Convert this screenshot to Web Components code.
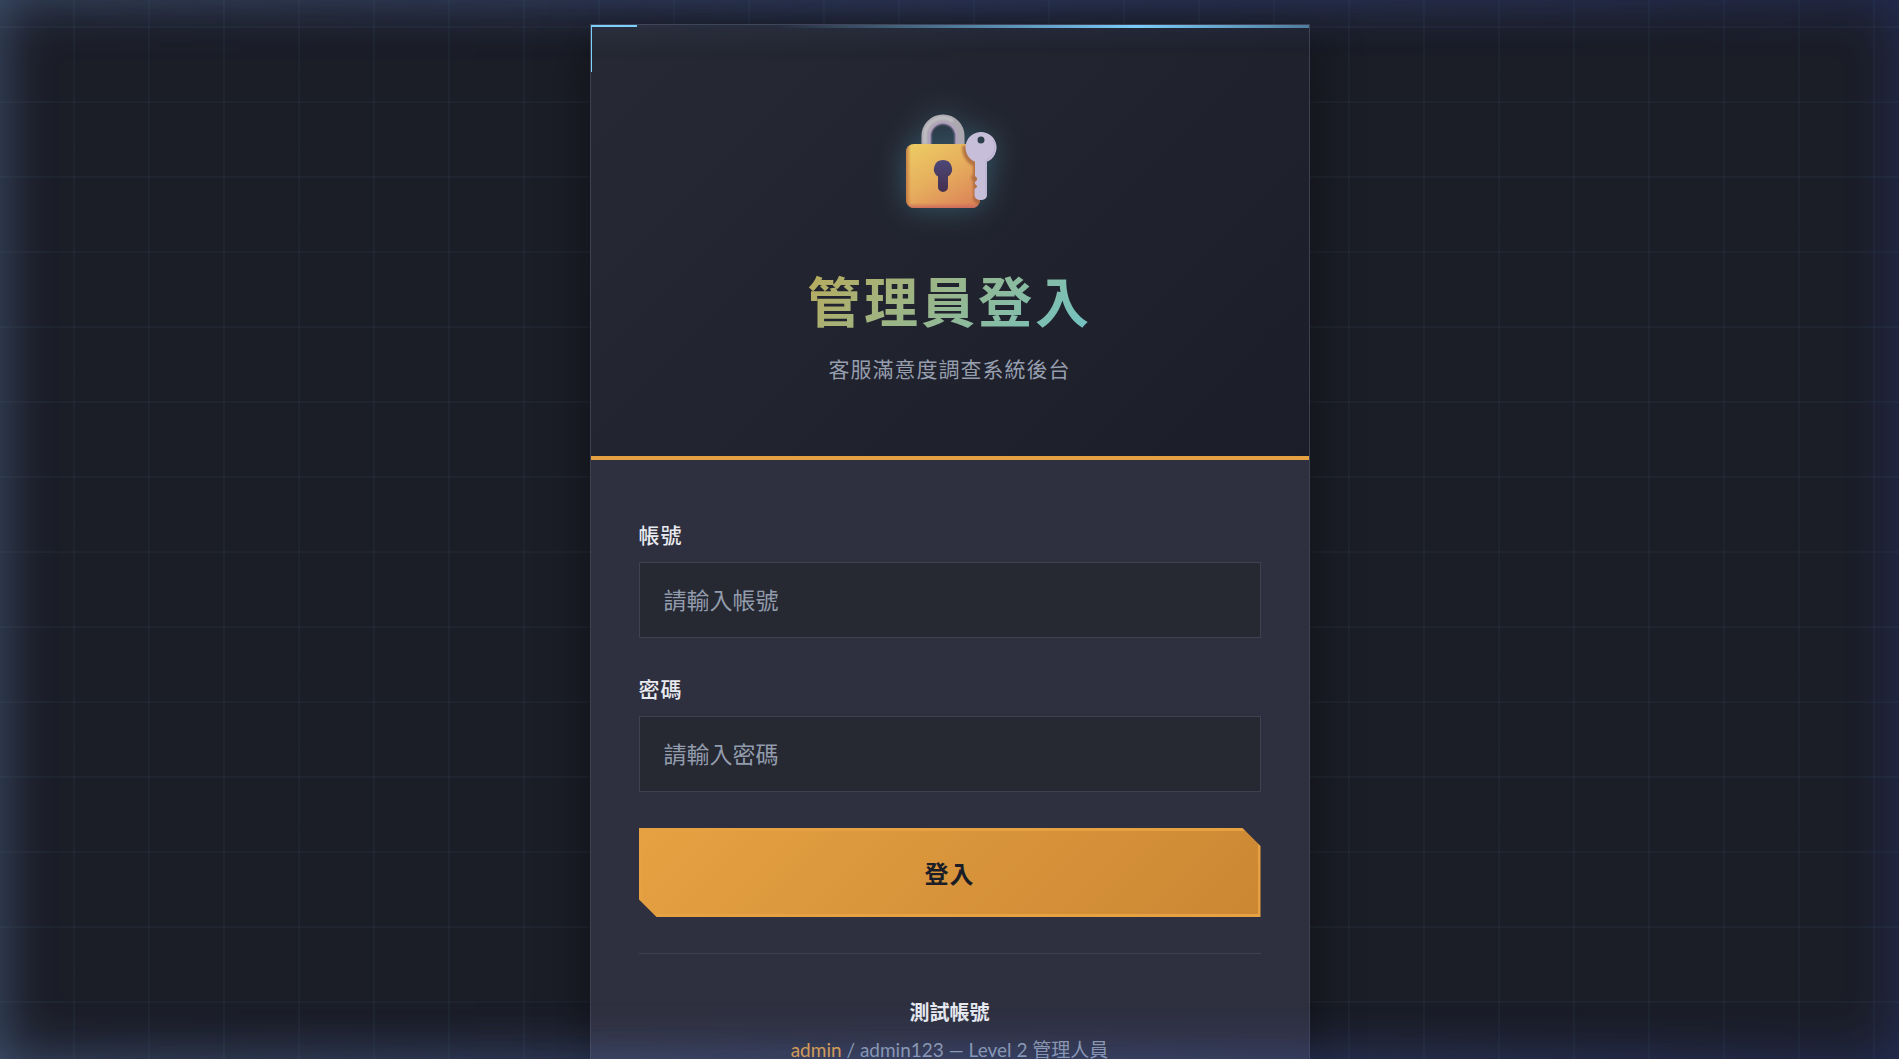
<!DOCTYPE html>
<html lang="zh-Hant">
<head>
<meta charset="UTF-8">
<meta name="viewport" content="width=device-width, initial-scale=1.0">
<title>管理員登入</title>
<style>
  :root {
    --bg: #1b1d27;
    --panel: #2f303f;
    --field: #262832;
    --line: #3f4150;
    --amber: #e5a142;
    --amber-dark: #cc8733;
    --cyan: #7dd3fc;
    --text: #e8eaf0;
    --muted: #929cac;
    scrollbar-width: none;
  }

  body {
    margin: 0;
    background: var(--bg);
    color: var(--text);
    font-family: Lato, "Noto Sans CJK TC", sans-serif;
    font-size: 19px;
  }
</style>
</head>
<body>
<login-page>
  <login-card>
    <login-header slot="header">
      <lock-icon slot="icon"></lock-icon>
      <span slot="title">管理員登入</span>
      <span slot="subtitle">客服滿意度調查系統後台</span>
    </login-header>
    <login-form>
      <form-field label="帳號" name="username" placeholder="請輸入帳號"></form-field>
      <form-field label="密碼" name="password" type="password" placeholder="請輸入密碼"></form-field>
      <submit-button>登入</submit-button>
    </login-form>
    <test-accounts heading="測試帳號">
      <account-line user="admin">admin123 — Level 2 管理人員</account-line>
    </test-accounts>
  </login-card>
</login-page>

<script>
  class BaseElement extends HTMLElement {
    constructor() {
      super();
      this.attachShadow({ mode: "open" });
    }

    connectedCallback() {
      const template = document.createElement("template");
      template.innerHTML = this.render();
      this.shadowRoot.replaceChildren(template.content);
    }
  }

  class LoginPage extends BaseElement {
    render() {
      return `
        <style>
          :host {
            display: flex;
            justify-content: center;
            align-items: center;
            box-sizing: border-box;
            min-height: 100vh;
            padding: 24px;
            background-image:
              linear-gradient(90deg, transparent 73px, rgba(125, 211, 252, 0.035) 73px),
              linear-gradient(180deg, transparent 73px, rgba(125, 211, 252, 0.035) 73px);
            background-size: 75px 75px;
            background-position: 0 0, 0 28px;
          }

          /* glow round the window edge: cyan on the left, indigo on the right */
          .glow {
            position: fixed;
            inset: 0;
            z-index: 10;
            pointer-events: none;
          }

          .cyan {
            box-shadow: inset 0 0 54px rgba(135, 185, 255, 0.34);
            mask-image: linear-gradient(90deg, #000, transparent);
          }

          .indigo {
            box-shadow: inset 0 0 54px rgba(64, 96, 220, 0.28);
            mask-image: linear-gradient(90deg, transparent, #000 50%);
          }
        </style>
        <slot></slot>
        <div class="glow cyan"></div>
        <div class="glow indigo"></div>
      `;
    }
  }

  class LoginCard extends BaseElement {
    render() {
      return `
        <style>
          :host {
            display: block;
            box-sizing: border-box;
            width: 100%;
            max-width: 720px;
            position: relative;
            background: var(--panel);
            border: 1px solid var(--line);
            box-shadow: 0 12px 48px rgba(0, 0, 0, 0.4);
          }

          .corner {
            position: absolute;
            top: 0;
            left: 0;
            width: 45px;
            height: 45px;
            border-top: 2px solid var(--cyan);
            border-left: 1px solid var(--cyan);
          }

          .content {
            padding: 60px 48px;
          }
        </style>
        <slot name="header"></slot>
        <div class="content"><slot></slot></div>
        <div class="corner"></div>
      `;
    }
  }

  class LoginHeader extends BaseElement {
    render() {
      return `
        <style>
          :host {
            display: flex;
            flex-direction: column;
            align-items: center;
            position: relative;
            padding: 87px 48px 70px;
            background: linear-gradient(135deg, #272a34, #1b1d28);
            border-bottom: 4px solid var(--amber);
          }

          .beam {
            position: absolute;
            top: 0;
            left: 0;
            right: 0;
            height: 3px;
            background: linear-gradient(90deg, transparent 26%, var(--cyan) 76%, transparent 126%);
          }

          h1 {
            margin: 63px 0 17px;
            font-size: 54px;
            line-height: 64px;
            font-weight: 700;
            letter-spacing: 3px;
            background: linear-gradient(135deg, #b9ab5c, #70c4c6);
            background-clip: text;
            color: transparent;
          }

          p {
            margin: 0;
            font-size: 21px;
            line-height: 34px;
            letter-spacing: 1px;
            color: #969eae;
          }
        </style>
        <div class="beam"></div>
        <slot name="icon"></slot>
        <h1><slot name="title"></slot></h1>
        <p><slot name="subtitle"></slot></p>
      `;
    }
  }

  class LockIcon extends BaseElement {
    render() {
      return `
        <style>
          :host {
            display: block;
            width: 96px;
            height: 96px;
            filter: drop-shadow(0 0 15px rgba(100, 200, 230, 0.32));
          }

          svg {
            display: block;
            overflow: visible;
          }
        </style>
        <svg width="96" height="96" viewBox="0 0 96 96" aria-hidden="true">
          <defs>
            <linearGradient id="body" x1="0.1" y1="0" x2="0.8" y2="1">
              <stop offset="0" stop-color="#eccb63"/>
              <stop offset="0.5" stop-color="#e6ae5d"/>
              <stop offset="1" stop-color="#dc8558"/>
            </linearGradient>
            <linearGradient id="side" x1="0" y1="0" x2="1" y2="0">
              <stop offset="0" stop-color="#b8683c" stop-opacity="0.75"/>
              <stop offset="1" stop-color="#b8683c" stop-opacity="0"/>
            </linearGradient>
            <linearGradient id="base" x1="0" y1="0" x2="0" y2="1">
              <stop offset="0" stop-color="#c8625c" stop-opacity="0"/>
              <stop offset="1" stop-color="#c8625c" stop-opacity="0.8"/>
            </linearGradient>
            <linearGradient id="hole" x1="0" y1="0" x2="0" y2="1">
              <stop offset="0" stop-color="#4d4777"/>
              <stop offset="1" stop-color="#45304f"/>
            </linearGradient>
            <filter id="soft" x="-50%" y="-50%" width="200%" height="200%">
              <feGaussianBlur stdDeviation="1"/>
            </filter>
            <clipPath id="bodyClip">
              <rect x="4" y="32" width="74" height="64" rx="8"/>
            </clipPath>
          </defs>
          <path d="M24 34V24a17 17 0 0 1 34 0v10" fill="none" stroke="#aba8b0" stroke-width="9"/>
          <path d="M28 34V24a13 13 0 0 1 26 0v10" fill="none" stroke="#b49cc6" stroke-width="2" filter="url(#soft)"/>
          <path d="M23 32V23a18 18 0 0 1 28-14" fill="none" stroke="#c4c1c5" stroke-width="3" filter="url(#soft)"/>
          <rect x="4" y="32" width="74" height="64" rx="8" fill="url(#body)"/>
          <g clip-path="url(#bodyClip)">
            <rect x="4" y="32" width="5" height="64" fill="url(#side)"/>
            <rect x="4" y="91" width="74" height="5" fill="url(#base)"/>
            <path d="M60 34q0 14 11 20v8l-2 4 2 4v18l4 4 8 4V32z" fill="#a8653c" opacity="0.8" filter="url(#soft)"/>
          </g>
          <path d="M41 48a9 9 0 0 1 5 16.500V75a5 5 0 0 1-10 0V64.500A9 9 0 0 1 41 48z" fill="url(#hole)"/>
          <path fill-rule="evenodd" d="M79 20a15.500 15.500 0 0 1 6 29.800V83a5 5 0 0 1-5 5h-2.500a5 5 0 0 1-5-5v-6l2.500-2v-1l-2-2v-2l2-2v-2l-2-2V49.800A15.500 15.500 0 0 1 79 20zm0 4.500a3.500 3.500 0 1 0 0 7 3.500 3.500 0 0 0 0-7z" fill="#c7bfda"/>
          <path d="M91 28a14 14 0 0 1-5 19l-2 2v34" fill="none" stroke="#aea1c4" stroke-width="1" opacity="0.6"/>
        </svg>
      `;
    }
  }

  class LoginForm extends BaseElement {
    render() {
      return `
        <style>
          :host {
            display: block;
          }

          form {
            display: flex;
            flex-direction: column;
            gap: 36px;
          }
        </style>
        <form><slot></slot></form>
      `;
    }
  }

  class FormField extends BaseElement {
    render() {
      const name = this.getAttribute("name");
      const type = this.getAttribute("type") || "text";
      return `
        <style>
          :host {
            display: flex;
            flex-direction: column;
            gap: 12px;
          }

          label {
            font-size: 21px;
            line-height: 30px;
            font-weight: 500;
            letter-spacing: 1px;
            color: var(--text);
          }

          input {
            box-sizing: border-box;
            width: 100%;
            height: 76px;
            padding: 0 24px;
            border: 1px solid var(--line);
            border-radius: 0;
            background: var(--field);
            color: var(--text);
            font-family: inherit;
            font-size: 23px;
            outline: none;
          }

          input:focus {
            border-color: var(--cyan);
          }

          input::placeholder {
            color: var(--muted);
            opacity: 1;
          }
        </style>
        <label for="${name}">${this.getAttribute("label")}</label>
        <input id="${name}" name="${name}" type="${type}" placeholder="${this.getAttribute("placeholder")}">
      `;
    }
  }

  class SubmitButton extends BaseElement {
    render() {
      return `
        <style>
          :host {
            display: block;
          }

          button {
            display: block;
            width: 100%;
            height: 89px;
            border: 3px solid var(--amber);
            background: linear-gradient(135deg, var(--amber), var(--amber-dark));
            clip-path: polygon(0 0, calc(100% - 18px) 0, 100% 18px, 100% 100%, 18px 100%, 0 calc(100% - 18px));
            color: #1b1d27;
            font-family: inherit;
            font-size: 24px;
            font-weight: 700;
            letter-spacing: 1px;
            cursor: pointer;
          }

          button:hover {
            background: var(--amber);
          }
        </style>
        <button type="submit"><slot></slot></button>
      `;
    }
  }

  class TestAccounts extends BaseElement {
    render() {
      return `
        <style>
          :host {
            display: flex;
            flex-direction: column;
            margin-top: 36px;
            padding-top: 39px;
            border-top: 1px solid var(--line);
            text-align: center;
            line-height: 38px;
            color: var(--muted);
          }

          strong {
            font-size: 20px;
            font-weight: 700;
            color: var(--text);
          }
        </style>
        <strong>${this.getAttribute("heading")}</strong>
        <slot></slot>
      `;
    }
  }

  class AccountLine extends BaseElement {
    render() {
      return `
        <style>
          :host {
            display: block;
          }

          .user {
            color: var(--amber);
          }
        </style>
        <span class="user">${this.getAttribute("user")}</span> / <slot></slot>
      `;
    }
  }

  customElements.define("login-page", LoginPage);
  customElements.define("login-card", LoginCard);
  customElements.define("login-header", LoginHeader);
  customElements.define("lock-icon", LockIcon);
  customElements.define("login-form", LoginForm);
  customElements.define("form-field", FormField);
  customElements.define("submit-button", SubmitButton);
  customElements.define("test-accounts", TestAccounts);
  customElements.define("account-line", AccountLine);
</script>
</body>
</html>
